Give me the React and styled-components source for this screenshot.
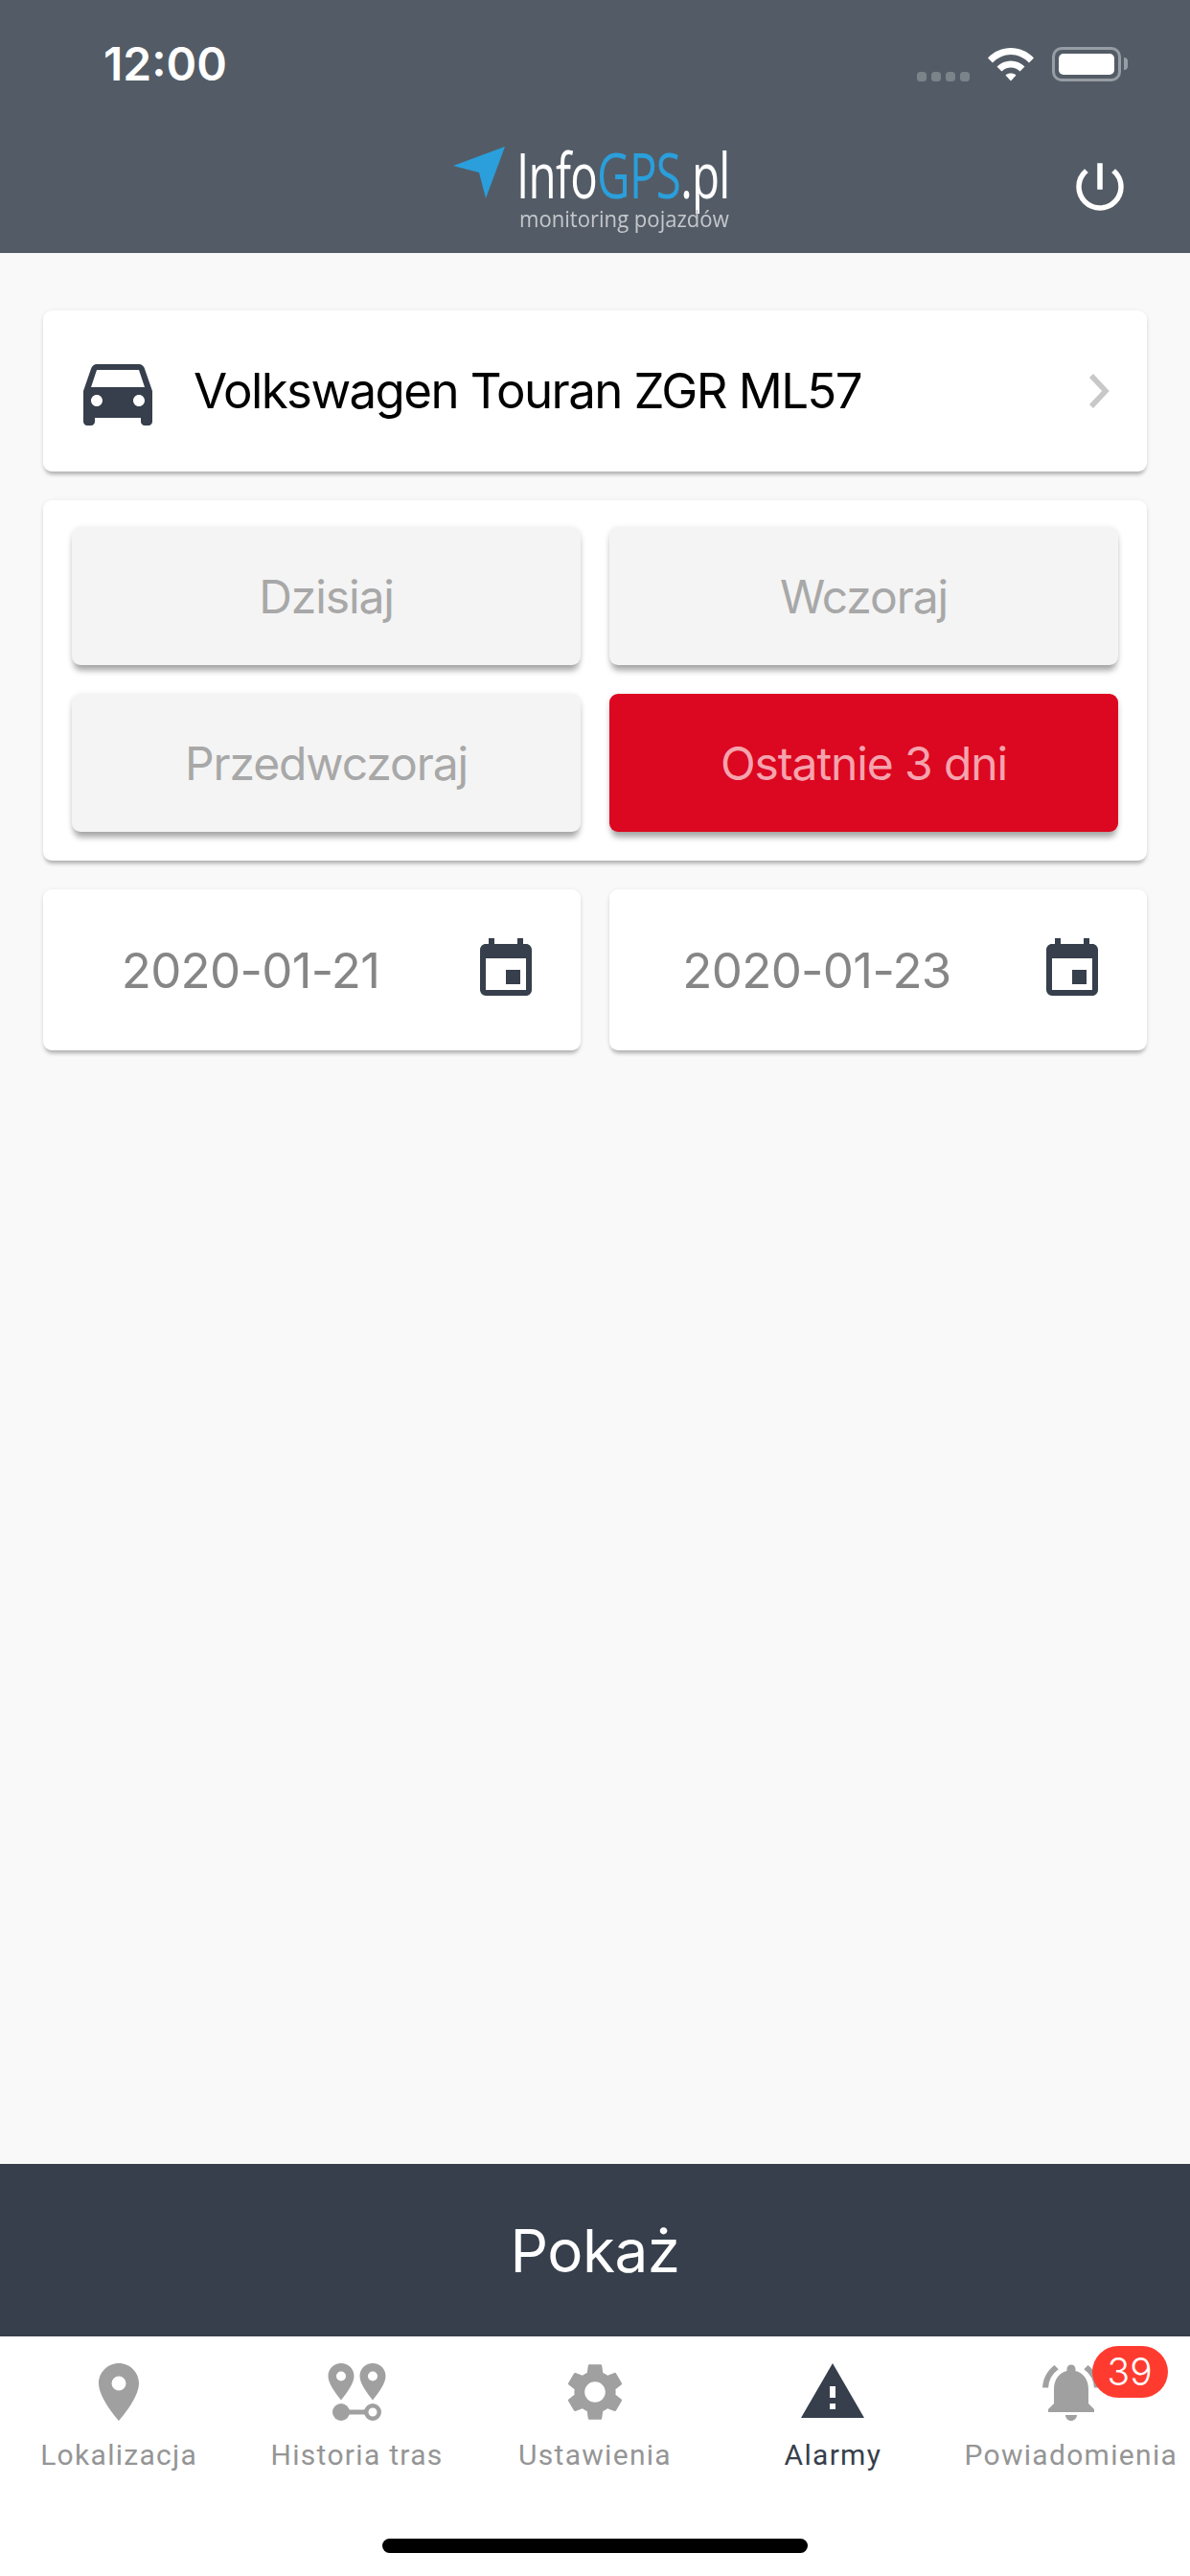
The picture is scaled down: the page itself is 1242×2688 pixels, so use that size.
import React from "react";
import styled, { createGlobalStyle } from "styled-components";
import {
  MdDirectionsCar,
  MdEvent,
  MdLocationOn,
  MdNotificationsActive,
  MdPowerSettingsNew,
  MdSettings,
  MdWarning
} from "react-icons/md";

const DARK = "#363f4b";
const MUTED = "#a0a0a0";

const GlobalStyle = createGlobalStyle`
  html, body {
    margin: 0;
    padding: 0;
    background: #f9f9f9;
  }
  * {
    box-sizing: border-box;
  }
`;

const Page = styled.div`
  width: 1242px;
  height: 2688px;
  display: flex;
  flex-direction: column;
  overflow: hidden;
  background: #f9f9f9;
  font-family: Inter, "Liberation Sans", sans-serif;
`;

const Header = styled.header`
  height: 264px;
  flex: none;
  background: #535c66;
  color: #fff;
  display: flex;
  flex-direction: column;
`;

const StatusBar = styled.div`
  height: 138px;
  flex: none;
  padding: 41px 72px 0 108px;
  display: flex;
  justify-content: space-between;
  align-items: flex-start;
`;

const Clock = styled.span`
  font-size: 48px;
  line-height: 52px;
  font-weight: 600;
`;

const StatusIcons = styled.div`
  display: flex;
  align-items: flex-end;
  margin-top: 8px;
`;

const SignalDots = styled.div`
  display: flex;
  gap: 5px;
  margin-right: 19px;
`;

const SignalDot = styled.i`
  display: block;
  width: 10px;
  height: 10px;
  border-radius: 3.5px;
  background: #7b838b;
`;

const Battery = styled.div`
  width: 72px;
  height: 36px;
  margin-left: 19px;
  padding: 4px;
  border: 3px solid #979da4;
  border-radius: 10px;
  position: relative;

  &::before {
    content: "";
    display: block;
    height: 100%;
    border-radius: 5px;
    background: #fff;
  }

  &::after {
    content: "";
    position: absolute;
    right: -10px;
    top: 8px;
    width: 4px;
    height: 13px;
    border-radius: 0 4px 4px 0;
    background: #979da4;
  }
`;

const NavRow = styled.div`
  flex: 1;
  padding: 15px 61px 0 473px;
  display: flex;
  justify-content: space-between;
  align-items: flex-start;
`;

const Logo = styled.div`
  display: flex;
  align-items: flex-start;
  filter: blur(0.5px);
`;

const LogoText = styled.div`
  margin-left: 15px;
  width: 215px;
  display: flex;
  flex-direction: column;
`;

const LogoName = styled.div`
  margin-left: -3px;
  font-family: "Open Sans", sans-serif;
  font-weight: 400;
  font-size: 66px;
  line-height: 56px;
  letter-spacing: -1px;
  white-space: nowrap;
  transform: scaleX(0.72);
  transform-origin: left center;
`;

const LogoAccent = styled.span`
  color: #2a9fdc;
`;

const LogoSub = styled.div`
  font-family: "Open Sans", sans-serif;
  font-size: 24px;
  line-height: 26px;
  font-weight: 400;
  color: #c4c7cb;
  white-space: nowrap;
  margin-top: 6px;
  transform: scaleX(0.92);
  transform-origin: left center;
`;

const PowerButton = styled.div`
  color: #fff;
  display: flex;
  margin-top: 9px;
`;

const Content = styled.main`
  flex: 1;
  padding: 60px 45px 0;
  display: flex;
  flex-direction: column;
  gap: 30px;
`;

const Card = styled.div`
  background: #fff;
  border-radius: 9px;
  box-shadow: 0 6px 4px -3px rgba(0, 0, 0, 0.2), 0 3px 4px rgba(0, 0, 0, 0.1), 0 0 5px rgba(0, 0, 0, 0.05);
`;

const VehicleCard = styled(Card)`
  height: 168px;
  padding: 0 39px 0 30px;
  display: flex;
  align-items: center;
  color: ${DARK};
`;

const VehicleName = styled.span`
  flex: 1;
  margin-left: 31px;
  color: #000;
  font-size: 51px;
  line-height: 60px;
  letter-spacing: -1.6px;
`;

const RangeCard = styled(Card)`
  padding: 28px 30px 30px;
  display: grid;
  grid-template-columns: 1fr 1fr;
  gap: 30px;
`;

const RangeButton = styled.div`
  height: 144px;
  border-radius: 9px;
  display: flex;
  align-items: center;
  justify-content: center;
  font-size: 48px;
  letter-spacing: -1.1px;
  background: ${(p) => (p.$active ? "#dc0720" : "#f4f4f4")};
  color: ${(p) => (p.$active ? "#f5a3ae" : "#a8a8a8")};
  box-shadow: 0 9px 6px -3px rgba(0, 0, 0, 0.25), 0 4px 6px rgba(0, 0, 0, 0.12), 0 0 6px rgba(0, 0, 0, 0.06);
`;

const DateRow = styled.div`
  display: grid;
  grid-template-columns: 1fr 1fr;
  gap: 30px;
`;

const DateCard = styled(Card)`
  height: 168px;
  padding: 0 42px 0 0;
  display: flex;
  align-items: center;
  color: ${DARK};
`;

const DateText = styled.span`
  flex: 1;
  padding-right: 14px;
  text-align: center;
  color: #868686;
  font-size: 51px;
  letter-spacing: -0.7px;
`;

const ShowBar = styled.div`
  height: 180px;
  flex: none;
  background: ${DARK};
  color: #fff;
  display: flex;
  align-items: center;
  justify-content: center;
  font-size: 62px;
  font-weight: 400;
  letter-spacing: -0.5px;
`;

const TabBar = styled.nav`
  height: 250px;
  flex: none;
  background: #fff;
  position: relative;
  display: grid;
  grid-template-columns: repeat(5, 1fr);
  align-items: start;
`;

const Tab = styled.div`
  padding-top: 22px;
  display: flex;
  flex-direction: column;
  align-items: center;
  position: relative;
  color: ${(p) => (p.$active ? DARK : MUTED)};
`;

const TabLabel = styled.span`
  margin-top: 10px;
  font-family: Roboto, sans-serif;
  font-size: 30px;
  line-height: 40px;
  letter-spacing: 1.3px;
  white-space: nowrap;
  color: ${(p) => (p.$active ? DARK : "#959595")};
`;

const Badge = styled.span`
  position: absolute;
  top: 10px;
  left: 146px;
  width: 79px;
  height: 54px;
  border-radius: 27px;
  background: #ff3b30;
  color: #fff;
  font-size: 39px;
  font-weight: 300;
  line-height: 54px;
  text-align: center;
`;

const HomeIndicator = styled.div`
  position: absolute;
  left: 399px;
  top: 211px;
  width: 444px;
  height: 15px;
  border-radius: 8px;
  background: #000;
`;

const WifiIcon = () => (
  <svg width="48" height="36" viewBox="0 0 48 36" fill="#fff">
    <path d="M0 11.5C6.5 4.5 15 1 24 1s17.500 3.500 24 10.500l-5 5C37.500 11 31 8 24 8S10.500 11 5 16.500z" />
    <path d="M9.500 20.500C13.500 16.500 18.500 14.500 24 14.500s10.500 2 14.500 6l-5 5C31 23 27.500 21.500 24 21.500s-7 1.500-9.500 4z" />
    <path d="M18.500 29.500c1.500-1.500 3.500-2 5.500-2s4 .5 5.500 2L24 35.500z" />
  </svg>
);

const LogoArrow = () => (
  <svg width="54" height="54" viewBox="0 0 54 54" style={{ flex: "none" }}>
    <path d="M0 20 54 0 34 54 27 27z" fill="#2a9fdc" />
  </svg>
);

const RouteIcon = () => (
  <svg width="72" height="72" viewBox="0 0 72 72" fill="currentColor">
    <path
      fillRule="evenodd"
      d="M19 6C11.500 6 5.500 11.500 5.500 19.500 5.500 27 13 37 19 44.500 25 37 32.500 27 32.500 19.500 32.500 11.500 26.500 6 19 6zm0 8.500a5 5 0 1 1 0 10 5 5 0 0 1 0-10z"
    />
    <path
      fillRule="evenodd"
      d="M52 6C44.500 6 38.500 11.500 38.500 19.500 38.500 27 46 37 52 44.500 58 37 65.500 27 65.500 19.500 65.500 11.500 59.500 6 52 6zm0 8.500a5 5 0 1 1 0 10 5 5 0 0 1 0-10z"
    />
    <circle cx="19" cy="57" r="9" />
    <rect x="19" y="54.500" width="26" height="5" />
    <path
      fillRule="evenodd"
      d="M52 48a9 9 0 1 0 0 18 9 9 0 0 0 0-18zm0 4.500a4.500 4.500 0 1 1 0 9 4.500 4.500 0 0 1 0-9z"
    />
  </svg>
);

const Chevron = () => (
  <svg width="22" height="36" viewBox="0 0 22 36" fill="none" stroke="#c8c8c8" strokeWidth="5.500">
    <path d="M3 2 18 18 3 34" />
  </svg>
);

const ranges = [
  { label: "Dzisiaj" },
  { label: "Wczoraj" },
  { label: "Przedwczoraj" },
  { label: "Ostatnie 3 dni", active: true }
];

const dates = ["2020-01-21", "2020-01-23"];

const tabs = [
  { label: "Lokalizacja", icon: <MdLocationOn size={72} /> },
  { label: "Historia tras", icon: <RouteIcon /> },
  { label: "Ustawienia", icon: <MdSettings size={72} /> },
  { label: "Alarmy", icon: <MdWarning size={72} />, active: true },
  { label: "Powiadomienia", icon: <MdNotificationsActive size={72} />, badge: 39 }
];

export default function App() {
  return (
    <Page>
      <GlobalStyle />
      <Header>
        <StatusBar>
          <Clock>12:00</Clock>
          <StatusIcons>
            <SignalDots>
              <SignalDot />
              <SignalDot />
              <SignalDot />
              <SignalDot />
            </SignalDots>
            <WifiIcon />
            <Battery />
          </StatusIcons>
        </StatusBar>
        <NavRow>
          <Logo>
            <LogoArrow />
            <LogoText>
              <LogoName>
                Info<LogoAccent>GPS</LogoAccent>.pl
              </LogoName>
              <LogoSub>monitoring pojazdów</LogoSub>
            </LogoText>
          </Logo>
          <PowerButton>
            <MdPowerSettingsNew size={66} />
          </PowerButton>
        </NavRow>
      </Header>
      <Content>
        <VehicleCard>
          <MdDirectionsCar size={96} />
          <VehicleName>Volkswagen Touran ZGR ML57</VehicleName>
          <Chevron />
        </VehicleCard>
        <RangeCard>
          {ranges.map((r) => (
            <RangeButton key={r.label} $active={r.active}>
              {r.label}
            </RangeButton>
          ))}
        </RangeCard>
        <DateRow>
          {dates.map((d) => (
            <DateCard key={d}>
              <DateText>{d}</DateText>
              <MdEvent size={72} />
            </DateCard>
          ))}
        </DateRow>
      </Content>
      <ShowBar>Pokaż</ShowBar>
      <TabBar>
        {tabs.map((t) => (
          <Tab key={t.label} $active={t.active}>
            {t.icon}
            <TabLabel $active={t.active}>{t.label}</TabLabel>
            {t.badge ? <Badge>{t.badge}</Badge> : null}
          </Tab>
        ))}
        <HomeIndicator />
      </TabBar>
    </Page>
  );
}
